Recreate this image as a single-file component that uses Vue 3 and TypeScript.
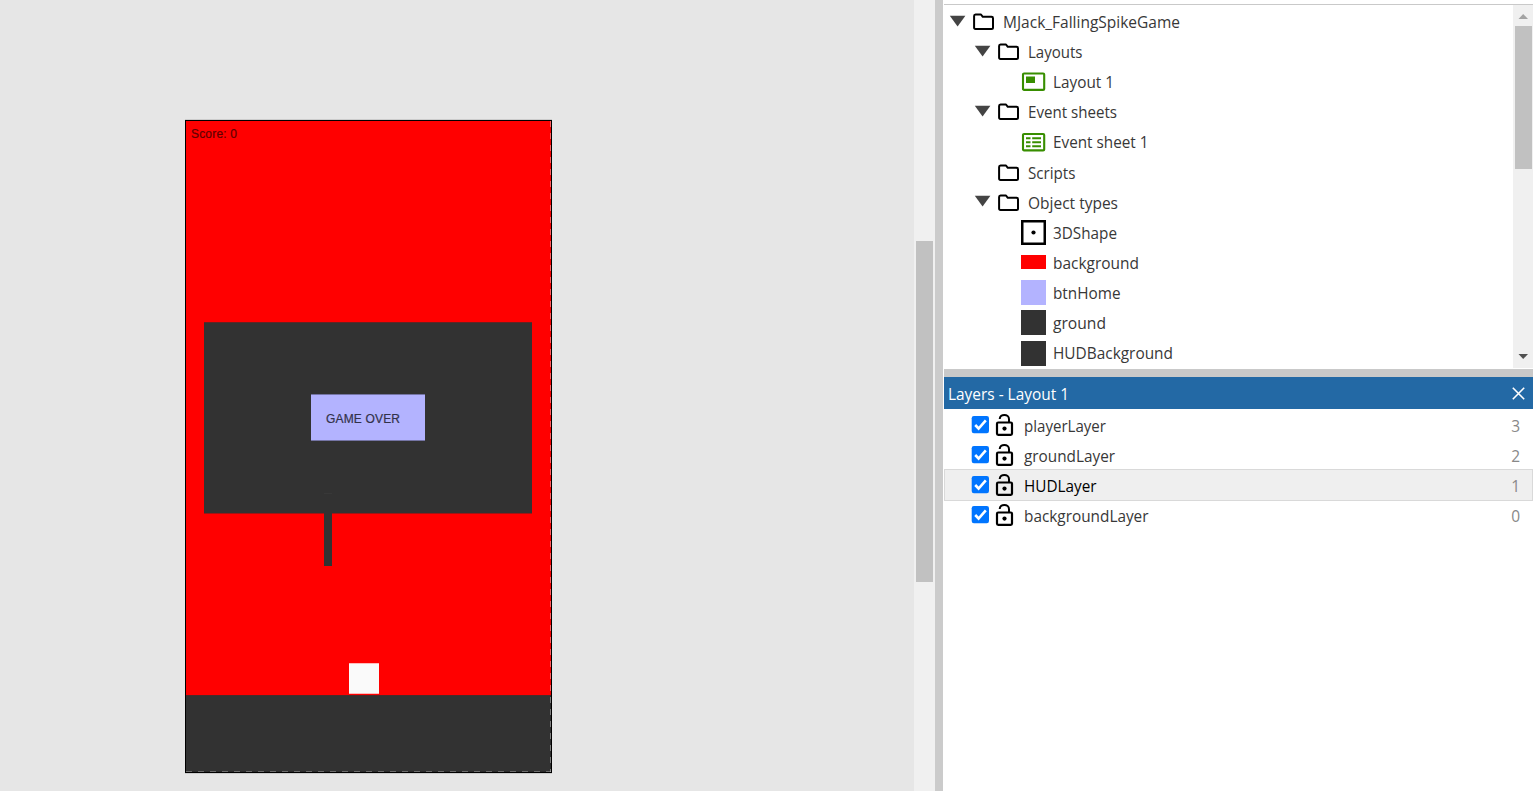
<script setup lang="ts">
interface TreeNode {
  label: string
  depth: number
  kind: 'folder' | 'layout' | 'events' | 'shape' | 'red' | 'lilac' | 'dark'
  open?: boolean
  track: number
}
interface Layer {
  name: string
  index: number
  selected?: boolean
  track: number
}

const nodes: TreeNode[] = [
  { label: 'MJack_FallingSpikeGame', depth: 0, kind: 'folder', open: true, track: 178 },
  { label: 'Layouts', depth: 1, kind: 'folder', open: true, track: 55.5 },
  { label: 'Layout 1', depth: 2, kind: 'layout', track: 62 },
  { label: 'Event sheets', depth: 1, kind: 'folder', open: true, track: 90 },
  { label: 'Event sheet 1', depth: 2, kind: 'events', track: 96.5 },
  { label: 'Scripts', depth: 1, kind: 'folder', track: 48.5 },
  { label: 'Object types', depth: 1, kind: 'folder', open: true, track: 91 },
  { label: '3DShape', depth: 2, kind: 'shape', track: 65 },
  { label: 'background', depth: 2, kind: 'red', track: 87 },
  { label: 'btnHome', depth: 2, kind: 'lilac', track: 68.5 },
  { label: 'ground', depth: 2, kind: 'dark', track: 54 },
  { label: 'HUDBackground', depth: 2, kind: 'dark', track: 121 },
]

const layers: Layer[] = [
  { name: 'playerLayer', index: 3, track: 83 },
  { name: 'groundLayer', index: 2, track: 92 },
  { name: 'HUDLayer', index: 1, selected: true, track: 73.5 },
  { name: 'backgroundLayer', index: 0, track: 125.5 },
]
</script>

<template>
  <div class="editor">
    <main class="canvas">
      <div class="stage">
        <div class="floor"></div>
        <div class="dash-right"></div>
        <div class="dash-bottom"></div>
        <svg class="score" width="60" height="18"><text x="0" y="13" textLength="46">Score: 0</text></svg>
        <div class="hud"></div>
        <div class="spike"></div>
        <div class="button">
          <svg width="90" height="18"><text x="0" y="13" textLength="74">GAME OVER</text></svg>
        </div>
        <div class="player"></div>
      </div>
    </main>
    <div class="canvas-scroll"><div class="canvas-thumb"></div></div>
    <div class="splitter"></div>
    <aside class="side">
      <section class="project">
        <div class="tree">
          <div v-for="node in nodes" :key="node.label" class="node" :class="'depth-' + node.depth">
            <span v-if="node.depth < 2" class="arrow">
              <svg v-if="node.open" width="16" height="12"><path d="M-.2 .8h15.6L7.6 11.6z" fill="#444" /></svg>
            </span>
            <svg v-if="node.kind === 'folder'" class="folder" width="22" height="18" viewBox="0 0 22 18">
              <path d="M2.5 1.5H8L9.8 3.8H18.5Q20 3.8 20 5.2V14.5Q20 16 18.5 16H2.5Q1.1 16 1.1 14.5V3Q1.1 1.5 2.5 1.5Z" fill="none" stroke="#000" stroke-width="2" stroke-linejoin="round" />
            </svg>
            <span v-else class="thumb">
              <svg v-if="node.kind === 'layout'" width="25" height="20">
                <rect x="2" y="1.5" width="21.2" height="16.4" rx="1" fill="none" stroke="#388e00" stroke-width="2.1" />
                <rect x="5" y="4.5" width="9" height="6.5" fill="#388e00" />
              </svg>
              <svg v-else-if="node.kind === 'events'" width="25" height="20">
                <rect x="2" y="2" width="21.2" height="16.4" rx="1" fill="none" stroke="#388e00" stroke-width="2.1" />
                <path d="M5 6.2h4.5M11.2 6.2H20M5 10.2h4.5M11.2 10.2H20M5 14.2h4.5M11.2 14.2H20" stroke="#388e00" stroke-width="2" />
              </svg>
              <svg v-else-if="node.kind === 'shape'" width="25" height="25">
                <rect x="1.25" y="1.25" width="22.5" height="22.5" fill="#fff" stroke="#000" stroke-width="2.5" />
                <circle cx="12.5" cy="12.5" r="2.1" />
              </svg>
              <span v-else class="swatch" :class="node.kind"></span>
            </span>
            <svg class="label" :width="node.track + 4" height="26"><text x="0" y="19" :textLength="node.track - 1" lengthAdjust="spacingAndGlyphs">{{ node.label }}</text></svg>
          </div>
        </div>
        <div class="tree-scroll">
          <svg width="20" height="21"><path d="M5.5 14h9.5L10.2 9z" fill="#a3a3a3" /></svg>
          <div class="tree-thumb"></div>
          <svg class="down" width="20" height="21"><path d="M5.5 7H15l-4.8 5z" fill="#505050" /></svg>
        </div>
      </section>
      <div class="divider"></div>
      <section class="layers">
        <header>
          <svg class="title" width="130" height="26"><text x="0" y="19" textLength="121" lengthAdjust="spacingAndGlyphs">Layers - Layout 1</text></svg>
          <svg width="13" height="13"><path d="M.8.8l11.4 11.4M12.2.8L.8 12.2" stroke="#fff" stroke-width="1.6" /></svg>
        </header>
        <div class="rows">
          <div v-for="layer in layers" :key="layer.name" class="row" :class="{ selected: layer.selected }">
            <svg width="18" height="18">
              <rect x="-.3" y="0" width="17.3" height="17.3" rx="2.2" fill="#0075ff" />
              <path d="M3.2 9l3.4 3.5L13.8 4.4" fill="none" stroke="#fff" stroke-width="2.6" />
            </svg>
            <svg class="lock" width="18" height="23" viewBox="0 0 18 23">
              <path d="M3.7 5C3.9-.5 13-.5 13 5.2V8.5" fill="none" stroke="#000" stroke-width="2" />
              <rect x="1" y="8.5" width="15" height="12.3" rx="1.2" fill="none" stroke="#000" stroke-width="2.2" />
              <circle cx="8.5" cy="14.6" r="2.1" />
            </svg>
            <svg class="label" :width="layer.track + 4" height="26"><text x="0" y="19" :textLength="layer.track - 1" lengthAdjust="spacingAndGlyphs">{{ layer.name }}</text></svg>
            <span class="index">{{ layer.index }}</span>
          </div>
        </div>
      </section>
    </aside>
  </div>
</template>

<style>
body { background: #fff; overflow: hidden; }
</style>

<style scoped>
* { box-sizing: border-box; }
svg { display: block; flex: none; overflow: visible; }
.editor {
  display: flex;
  width: 1533px;
  height: 791px;
  overflow: hidden;
  font-family: "Open Sans", "Noto Sans", sans-serif;
  font-size: 15.5px;
}
.canvas { width: 914px; background: #e6e6e6; padding: 120px 0 0 185px; }
.stage {
  position: relative;
  width: 367px;
  height: 653px;
  background: #f00;
  border: 1px solid #000;
  box-shadow: 0 -1px #ccc, 0 1px #ccc;
}
.stage > * { position: absolute; }
.floor { left: 0; right: 0; bottom: 0; height: 77px; background: #323232; border-top: 1px solid #4c2929; }
.dash-right {
  right: 0; top: 0; bottom: 0; width: 1px;
  background: repeating-linear-gradient(to bottom, #ffffff60 0 6px, #00000010 6px 12px);
}
.dash-bottom {
  left: 0; right: 0; bottom: 0; height: 1px;
  background: repeating-linear-gradient(to right, #ffffff48 0 6px, #00000020 6px 12px);
}
.score, .button svg { font-family: "Liberation Sans", Arial, sans-serif; font-size: 12px; }
.score { left: 5px; top: 4px; fill: #600000; stroke: #600000; stroke-width: .2px; }
.hud { left: 18px; top: 201px; width: 328px; height: 192px; background: #323232; border-top: 1px solid #632424; border-bottom: 1px solid #a01414; }
.spike { left: 138px; top: 372px; width: 8px; height: 73px; background: #323232; border-top: 1px solid #383838; }
.button { left: 125px; top: 273px; width: 114px; height: 47px; padding: 15px 0 0 15px; background: #b3b3ff; border: solid #7575a5; border-width: 1px 0; }
.button svg { fill: #32324a; stroke: #32324a; stroke-width: .2px; }
.player { left: 163px; top: 542px; width: 30px; height: 31px; background: #fafafa; border: solid #fbb; border-width: 1px 0; }
.canvas-scroll { width: 21px; background: #f0f0f0; padding: 241px 2px 0; }
.canvas-thumb { height: 341px; background: #c1c1c1; }
.splitter { width: 8px; background: #cbcbcb; }
.side { flex: 1; display: flex; flex-direction: column; padding-left: 1px; background: #fff; }
.project { display: flex; height: 365px; margin-top: 4px; border-top: 1px solid #c9c9c9; }
.tree { flex: 1; padding-top: 2px; overflow: hidden; }
.node { display: flex; align-items: center; height: 30.1px; }
.depth-0 { padding-left: 6px; }
.depth-1 { padding-left: 31px; }
.depth-2 { padding-left: 77px; }
.arrow { width: 16px; height: 12px; margin: -3px 7px 0 0; }
.folder { margin-right: 8px; }
.thumb { display: flex; align-items: center; justify-content: center; width: 25px; height: 25px; margin-right: 7px; }
.swatch { width: 25px; height: 25px; }
.red { height: 14px; margin-top: -1px; background: #f00; }
.lilac { background: #b3b3ff; }
.dark { background: #323232; }
.label { fill: #383838; }
.tree-scroll { display: flex; flex-direction: column; width: 20px; height: 363px; background: #f0f0f0; }
.tree-thumb { width: 17px; height: 143px; margin-left: 2px; background: #c1c1c1; }
.down { margin-top: auto; }
.divider { height: 8px; background: #c9c9c9; }
header { display: flex; align-items: center; justify-content: space-between; height: 32px; padding: 0 8px 0 4px; background: #2369a5; }
.title { fill: #fff; margin-top: 1px; }
.rows { padding-top: 1px; }
.row { display: flex; align-items: center; height: 30px; padding: 0 13px 0 28px; }
.selected { height: 32px; margin: -1px 0; padding: 0 12px 0 27px; background: #efefef; border: 1px solid #d9d9d9; }
.lock { margin: 0 10px 0 6px; }
.row .label { margin-top: 1px; }
.selected .label { fill: #000; }
.index { margin-left: auto; padding-top: 2px; color: #888; font-size: 15.5px; line-height: 22px; }
</style>
